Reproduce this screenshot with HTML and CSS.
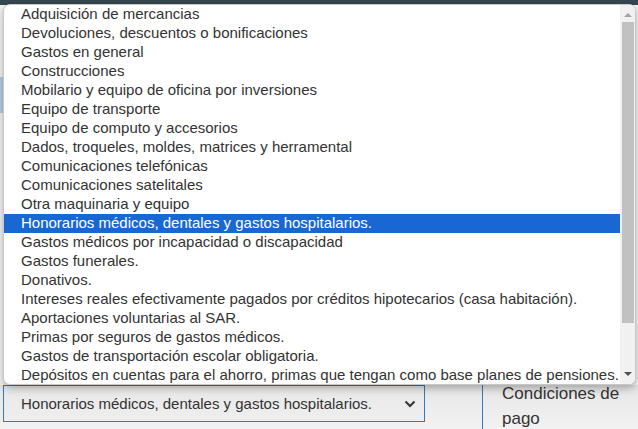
FILE: index.html
```html
<!DOCTYPE html>
<html lang="es">
<head>
<meta charset="utf-8">
<link rel="stylesheet" href="styles.css">
</head>
<body>
<div class="page">
  <div class="topbar"></div>
  <div class="content">
    <div class="band"></div>
  </div>
  <div class="row">
    <div class="select">
      <span class="select-text">Honorarios médicos, dentales y gastos hospitalarios.</span>
      <svg class="chev" width="12" height="8" viewBox="0 0 12 8"><path d="M1.5 1.5 L6 6 L10.5 1.5" fill="none" stroke="#333" stroke-width="2"/></svg>
    </div>
    <div class="divider"></div>
    <div class="label">Condiciones de<br>pago</div>
  </div>
</div>

<div class="popup">
  <ul class="list">
    <li>Adquisición de mercancias</li>
    <li>Devoluciones, descuentos o bonificaciones</li>
    <li>Gastos en general</li>
    <li>Construcciones</li>
    <li>Mobilario y equipo de oficina por inversiones</li>
    <li>Equipo de transporte</li>
    <li>Equipo de computo y accesorios</li>
    <li>Dados, troqueles, moldes, matrices y herramental</li>
    <li>Comunicaciones telefónicas</li>
    <li>Comunicaciones satelitales</li>
    <li>Otra maquinaria y equipo</li>
    <li class="sel">Honorarios médicos, dentales y gastos hospitalarios.</li>
    <li>Gastos médicos por incapacidad o discapacidad</li>
    <li>Gastos funerales.</li>
    <li>Donativos.</li>
    <li>Intereses reales efectivamente pagados por créditos hipotecarios (casa habitación).</li>
    <li>Aportaciones voluntarias al SAR.</li>
    <li>Primas por seguros de gastos médicos.</li>
    <li>Gastos de transportación escolar obligatoria.</li>
    <li>Depósitos en cuentas para el ahorro, primas que tengan como base planes de pensiones.</li>
  </ul>
  <div class="scrollbar">
    <div class="arrow up"></div>
    <div class="thumb"></div>
    <div class="arrow down"></div>
  </div>
</div>
</body>
</html>
```

FILE: styles.css
```css
html, body {
  margin: 0;
  padding: 0;
}
body {
  width: 638px;
  height: 429px;
  overflow: hidden;
  position: relative;
  font-family: "Liberation Sans", Arial, sans-serif;
  background: #f2f2f2;
}
.page {
  display: flex;
  flex-direction: column;
  height: 429px;
}
.topbar {
  height: 5px;
  background: #37474f;
  flex: none;
}
.content {
  height: 380px;
  flex: none;
  background: #f5f5f5;
  display: flex;
  flex-direction: column;
  padding-top: 72px;
  box-sizing: border-box;
}
.band {
  height: 36px;
  width: 20px;
  background: #b9cde6;
}
.row {
  flex: 1;
  display: flex;
  align-items: stretch;
  background: linear-gradient(#e6e6e6, #f3f3f3);
  padding-left: 3px;
}
.select {
  width: 422px;
  height: 37px;
  box-sizing: border-box;
  border: 1px solid #337ab7;
  background: linear-gradient(#e9e9e9, #eeeeee);
  display: flex;
  align-items: center;
  justify-content: space-between;
  padding: 0 8px 0 17px;
  font-size: 15px;
  color: #333;
}
.chev {
  display: block;
}
.divider {
  width: 1px;
  background: #337ab7;
  margin-left: 57px;
}
.label {
  margin-left: 19px;
  font-size: 17px;
  line-height: 25px;
  color: #333;
  margin-top: -4px;
}
.popup {
  position: absolute;
  left: 3px;
  top: 4px;
  width: 633px;
  height: 381px;
  box-sizing: border-box;
  background: #fff;
  border: 1px solid #c8c8c8;
  border-radius: 7px;
  box-shadow: 0 3px 8px rgba(0, 0, 0, 0.3);
  display: flex;
  overflow: hidden;
}
.list {
  list-style: none;
  margin: 0;
  padding: 0;
  flex: 1;
}
.list li {
  height: 19px;
  line-height: 18px;
  font-size: 15px;
  color: #333;
  padding-left: 17px;
  white-space: nowrap;
}
.list li.sel {
  background: #1967d2;
  color: #fff;
}
.scrollbar {
  width: 15px;
  background: #f1f1f1;
  display: flex;
  flex-direction: column;
  align-items: center;
  flex: none;
}
.thumb {
  width: 12px;
  margin-top: 5px;
  height: 301px;
  background: #c1c1c1;
}
.arrow {
  width: 0;
  height: 0;
  border-left: 4px solid transparent;
  border-right: 4px solid transparent;
}
.arrow.up {
  margin-top: 8px;
  border-bottom: 4px solid #a3a3a3;
}
.arrow.down {
  margin-top: 49px;
  border-top: 4px solid #505050;
}
```
